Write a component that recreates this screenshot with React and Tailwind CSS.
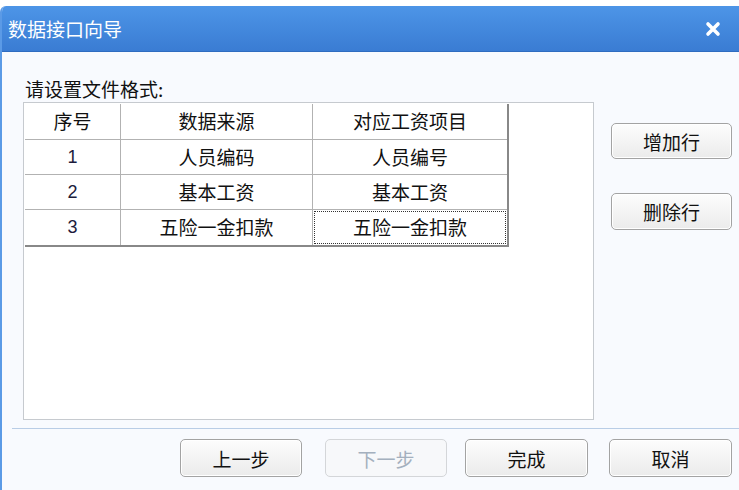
import React from "react";

const F = { fontFamily: '"Noto Sans CJK SC", "Microsoft YaHei", sans-serif' };

function Btn({ children, disabled, className = "" }) {
  return (
    <div
      className={
        "flex items-center justify-center rounded-[5px] border text-[19px] leading-none " +
        (disabled
          ? "border-[#d4d6d9] bg-[#f7f8fa] text-[#a4b0be] "
          : "border-[#a3a3a3] bg-gradient-to-b from-[#fdfdfd] to-[#ebebeb] text-[#111] shadow-[inset_0_0_0_1px_#ffffff] ") +
        className
      }
    >
      {children}
    </div>
  );
}

const rows = [
  ["1", "人员编码", "人员编号"],
  ["2", "基本工资", "基本工资"],
  ["3", "五险一金扣款", "五险一金扣款"],
];

export default function App() {
  return (
    <div className="w-[739px] h-[490px] bg-white pt-[6px] flex flex-col overflow-hidden" style={F}>
      <div className="flex-1 flex flex-col border-l-2 border-[#5b9ae6] rounded-tl-[6px] overflow-hidden">
        <div className="h-[46px] shrink-0 flex items-center justify-between bg-gradient-to-b from-[#4d95e7] to-[#3a7cd3] border-b border-[#2f6cc0] pl-[6px] pr-[18px]">
          <span className="text-white text-[19px] leading-none">数据接口向导</span>
          <svg width="16" height="16" viewBox="0 0 16 16">
            <path d="M3 3 L13 13 M13 3 L3 13" stroke="white" strokeWidth="3.6" strokeLinecap="round" />
          </svg>
        </div>
        <div className="flex-1 flex flex-col bg-[#f8fafe]">
          <div className="pt-[26px] pl-[23px] text-[19px] leading-[22px] text-[#111]">请设置文件格式:</div>
          <div className="flex mt-[2px] pl-[21px]">
            <div className="w-[571px] h-[318px] border border-[#c6cacf] bg-white pl-[1px] pt-[1px]">
              <div className="w-[484px] border-r-2 border-b-2 border-[#888888] text-[19px] text-[#111]">
                <div className="flex h-[36px] border-b border-[#b2b2b2]">
                  <div className="w-[96px] border-r border-[#b2b2b2] flex items-center justify-center">序号</div>
                  <div className="w-[192px] border-r border-[#b2b2b2] flex items-center justify-center">数据来源</div>
                  <div className="flex-1 flex items-center justify-center">对应工资项目</div>
                </div>
                {rows.map((r, i) => (
                  <div
                    key={i}
                    className={"flex h-[35px] " + (i < rows.length - 1 ? "border-b border-[#b2b2b2]" : "")}
                  >
                    <div
                      className="w-[96px] border-r border-[#b2b2b2] flex items-center justify-center text-[#1c1c3c]"
                      style={{ fontFamily: '"Liberation Sans", Arial, sans-serif', fontSize: 18 }}
                    >
                      {r[0]}
                    </div>
                    <div className="w-[192px] border-r border-[#b2b2b2] flex items-center justify-center">{r[1]}</div>
                    <div className="flex-1 flex p-[1px]">
                      <div
                        className={
                          "flex-1 flex items-center justify-center " +
                          (i === rows.length - 1 ? "border border-dotted border-[#333]" : "")
                        }
                      >
                        {r[2]}
                      </div>
                    </div>
                  </div>
                ))}
              </div>
            </div>
            <div className="flex flex-col ml-[17px] pt-[21px]">
              <Btn className="w-[121px] h-[36px]">增加行</Btn>
              <Btn className="w-[121px] h-[37px] mt-[34px]">删除行</Btn>
            </div>
          </div>
          <div className="mt-[8px] ml-[10px] border-t border-[#b9cde6]" />
          <div className="flex mt-[10px]">
            <Btn className="ml-[178px] w-[122px] h-[38px]">上一步</Btn>
            <Btn disabled className="ml-[23px] w-[122px] h-[38px]">下一步</Btn>
            <Btn className="ml-[18px] w-[123px] h-[38px]">完成</Btn>
            <Btn className="ml-[21px] w-[123px] h-[38px]">取消</Btn>
          </div>
        </div>
      </div>
    </div>
  );
}
